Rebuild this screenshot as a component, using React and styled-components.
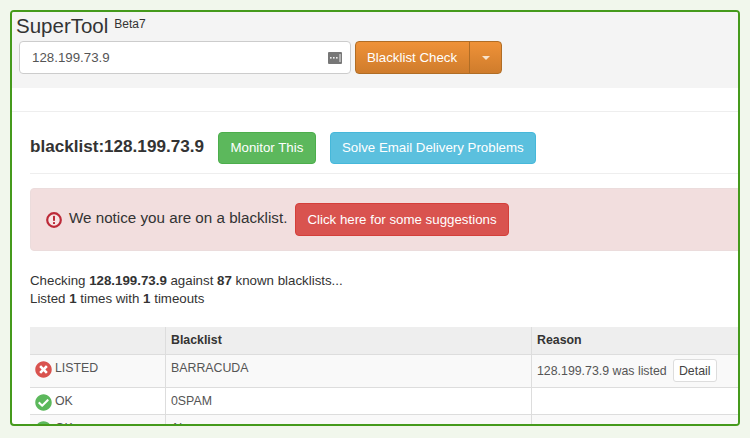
import React from 'react';
import styled, { createGlobalStyle } from 'styled-components';
import { FaTimesCircle, FaCheckCircle } from 'react-icons/fa';

const GlobalStyle = createGlobalStyle`
    html, body {
        margin: 0;
        background: #f1f7ec;
        font-family: "Liberation Sans", Arial, sans-serif;
        color: #333;
    }
`;

const Frame = styled.div`
    box-sizing: border-box;
    width: 730px;
    height: 416px;
    margin: 10px 0 0 10px;
    border: 2px solid #459a1c;
    border-radius: 4px;
    background: #fff;
    overflow: hidden;
`;

const Header = styled.div`
    height: 76px;
    padding: 0 0 0 4px;
    box-sizing: border-box;
    background: #f4f4f4;
`;

const Brand = styled.div`
    display: flex;
    align-items: flex-start;
    height: 29px;
    gap: 6px;
`;

const Title = styled.div`
    font-size: 20.5px;
    line-height: 27px;
    color: #333;
`;

const Version = styled.div`
    font-size: 12px;
    line-height: 24px;
`;

const SearchRow = styled.div`
    display: flex;
    gap: 4px;
    margin-left: 3px;
`;

const SearchBox = styled.div`
    box-sizing: border-box;
    width: 332px;
    height: 33px;
    padding: 0 8px 0 12px;
    display: flex;
    align-items: center;
    justify-content: space-between;
    background: #fff;
    border: 1px solid #ccc;
    border-radius: 4px;
    font-size: 13.3px;
    color: #555;
`;

const SplitButton = styled.div`
    display: flex;
    height: 33px;
    border: 1px solid #b06d25;
    border-radius: 4px;
    box-sizing: border-box;
    background: linear-gradient(#ef9238, #cf7c2c);
    color: #fff;
    font-size: 13.3px;
`;

const SplitLabel = styled.div`
    display: flex;
    align-items: center;
    padding: 0 12px 0 11px;
    border-right: 1px solid #b06d25;
`;

const SplitCaret = styled.div`
    display: flex;
    align-items: center;
    justify-content: center;
    width: 31px;

    &::after {
        content: "";
        border-top: 4px solid #f8e3cc;
        border-left: 4px solid transparent;
        border-right: 4px solid transparent;
    }
`;

const Spacer = styled.div`
    height: 23px;
    border-bottom: 1px solid #eee;
`;

const Content = styled.div`
    width: 800px;
    padding-left: 18px;
`;

const Heading = styled.div`
    display: flex;
    align-items: flex-start;
    gap: 14px;
    height: 62px;
    padding-top: 20px;
    box-sizing: border-box;
    border-bottom: 1px solid #eee;
`;

const HeadingText = styled.div`
    font-size: 17.1px;
    line-height: 29px;
    font-weight: bold;
`;

const Button = styled.div`
    display: inline-flex;
    align-items: center;
    justify-content: center;
    box-sizing: border-box;
    height: ${p => p.$h}px;
    min-width: ${p => p.$minW || 0}px;
    padding: 0 11px 1px;
    border: 1px solid ${p => p.$border};
    border-radius: 4px;
    background: ${p => p.$bg};
    color: #fff;
    font-size: 13.3px;
`;

const Alert = styled.div`
    display: flex;
    align-items: center;
    height: 63px;
    margin-top: 14px;
    padding-left: 15px;
    box-sizing: border-box;
    background: #f2dede;
    border: 1px solid #ebdcdc;
    border-radius: 4px;
    font-size: 15.2px;
`;

const AlertIcon = styled.span`
    display: flex;
    margin-right: 7px;
`;

const AlertText = styled.span`
    margin-right: 8px;
    padding-bottom: 4px;
`;

const Summary = styled.div`
    margin-top: 21px;
    font-size: 13.3px;
    line-height: 18px;
`;

const Table = styled.div`
    margin-top: 19px;
    font-size: 12.35px;
    display: grid;
    grid-template-columns: 135px 366px 1fr;
`;

const Cell = styled.div`
    box-sizing: border-box;
    display: flex;
    align-items: ${p => p.$head ? 'center' : 'flex-start'};
    gap: 3px;
    height: ${p => p.$h}px;
    padding: ${p => p.$head ? '0 0 1px 5px' : '6px 0 0 5px'};
    line-height: 14px;
    background: ${p => p.$bg};
    color: ${p => p.$head ? '#333' : '#555'};
    font-weight: ${p => p.$head ? 'bold' : 'normal'};
    border-left: ${p => p.$first ? 'none' : '1px solid #ddd'};
    border-bottom: 1px solid #ddd;
`;

const ReasonCell = styled(Cell)`
    align-items: center;
    padding: 0 0 1px 5px;
`;

const StatusIcon = styled.span`
    display: flex;
    font-size: 17px;
    color: ${p => p.$color};
    background: radial-gradient(circle, #fff 45%, transparent 46%);
`;

const DetailButton = styled.div`
    margin-left: 3px;
    width: 44px;
    height: 23px;
    display: flex;
    align-items: center;
    justify-content: center;
    box-sizing: border-box;
    background: #fff;
    border: 1px solid #ddd;
    border-radius: 3px;
    font-size: 12.35px;
    color: #444;
`;

const KeyIcon = () => (
    <svg width="14" height="14" viewBox="0 0 14 14">
        <rect x="0" y="1" width="14" height="12" rx="1" fill="#777" />
        <rect x="2" y="6" width="1.6" height="1.6" fill="#eee" />
        <rect x="5" y="6" width="1.6" height="1.6" fill="#eee" />
        <rect x="8" y="6" width="1.6" height="1.6" fill="#eee" />
        <rect x="11.5" y="3" width="1" height="8" fill="#eee" />
    </svg>
);

const NoticeIcon = () => (
    <svg width="16" height="16" viewBox="0 0 16 16">
        <circle cx="8" cy="8" r="6.8" fill="#f7e6e6" stroke="#bd2a38" strokeWidth="2.2" />
        <rect x="7" y="3.8" width="2" height="5.2" rx="0.8" fill="#bd2a38" />
        <rect x="7" y="10" width="2" height="2" rx="0.6" fill="#bd2a38" />
    </svg>
);

const rows = [
    { ok: false, status: 'LISTED', name: 'BARRACUDA', reason: '128.199.73.9 was listed', h: 33, bg: '#f9f9f9' },
    { ok: true, status: 'OK', name: '0SPAM', reason: '', h: 27, bg: '#fff' },
    { ok: true, status: 'OK', name: 'Abuse.ro', reason: '', h: 27, bg: '#f9f9f9' },
];

export default function App() {
    return (
        <>
            <GlobalStyle />
            <Frame>
                <Header>
                    <Brand>
                        <Title>SuperTool</Title>
                        <Version>Beta7</Version>
                    </Brand>
                    <SearchRow>
                        <SearchBox>
                            128.199.73.9
                            <KeyIcon />
                        </SearchBox>
                        <SplitButton>
                            <SplitLabel>Blacklist Check</SplitLabel>
                            <SplitCaret />
                        </SplitButton>
                    </SearchRow>
                </Header>
                <Spacer />
                <Content>
                    <Heading>
                        <HeadingText>blacklist:128.199.73.9</HeadingText>
                        <Button $h={32} $minW={98} $bg="#5cb85c" $border="#4cae4c">Monitor This</Button>
                        <Button $h={32} $bg="#5bc0de" $border="#46b8da">Solve Email Delivery Problems</Button>
                    </Heading>
                    <Alert>
                        <AlertIcon><NoticeIcon /></AlertIcon>
                        <AlertText>We notice you are on a blacklist.</AlertText>
                        <Button $h={33} $bg="#d9534f" $border="#d43f3a">Click here for some suggestions</Button>
                    </Alert>
                    <Summary>
                        Checking <b>128.199.73.9</b> against <b>87</b> known blacklists...<br />
                        Listed <b>1</b> times with <b>1</b> timeouts
                    </Summary>
                    <Table>
                        <Cell $head $first $h={28} $bg="#eee" />
                        <Cell $head $h={28} $bg="#eee">Blacklist</Cell>
                        <ReasonCell $head $h={28} $bg="#eee">Reason</ReasonCell>
                        {rows.map(r => (
                            <React.Fragment key={r.name}>
                                <Cell $first $h={r.h} $bg={r.bg}>
                                    <StatusIcon $color={r.ok ? '#5cb85c' : '#d9534f'}>
                                        {r.ok ? <FaCheckCircle /> : <FaTimesCircle />}
                                    </StatusIcon>
                                    {r.status}
                                </Cell>
                                <Cell $h={r.h} $bg={r.bg}>{r.name}</Cell>
                                <ReasonCell $h={r.h} $bg={r.bg}>
                                    {r.reason}
                                    {r.reason && <DetailButton>Detail</DetailButton>}
                                </ReasonCell>
                            </React.Fragment>
                        ))}
                    </Table>
                </Content>
            </Frame>
        </>
    );
}
